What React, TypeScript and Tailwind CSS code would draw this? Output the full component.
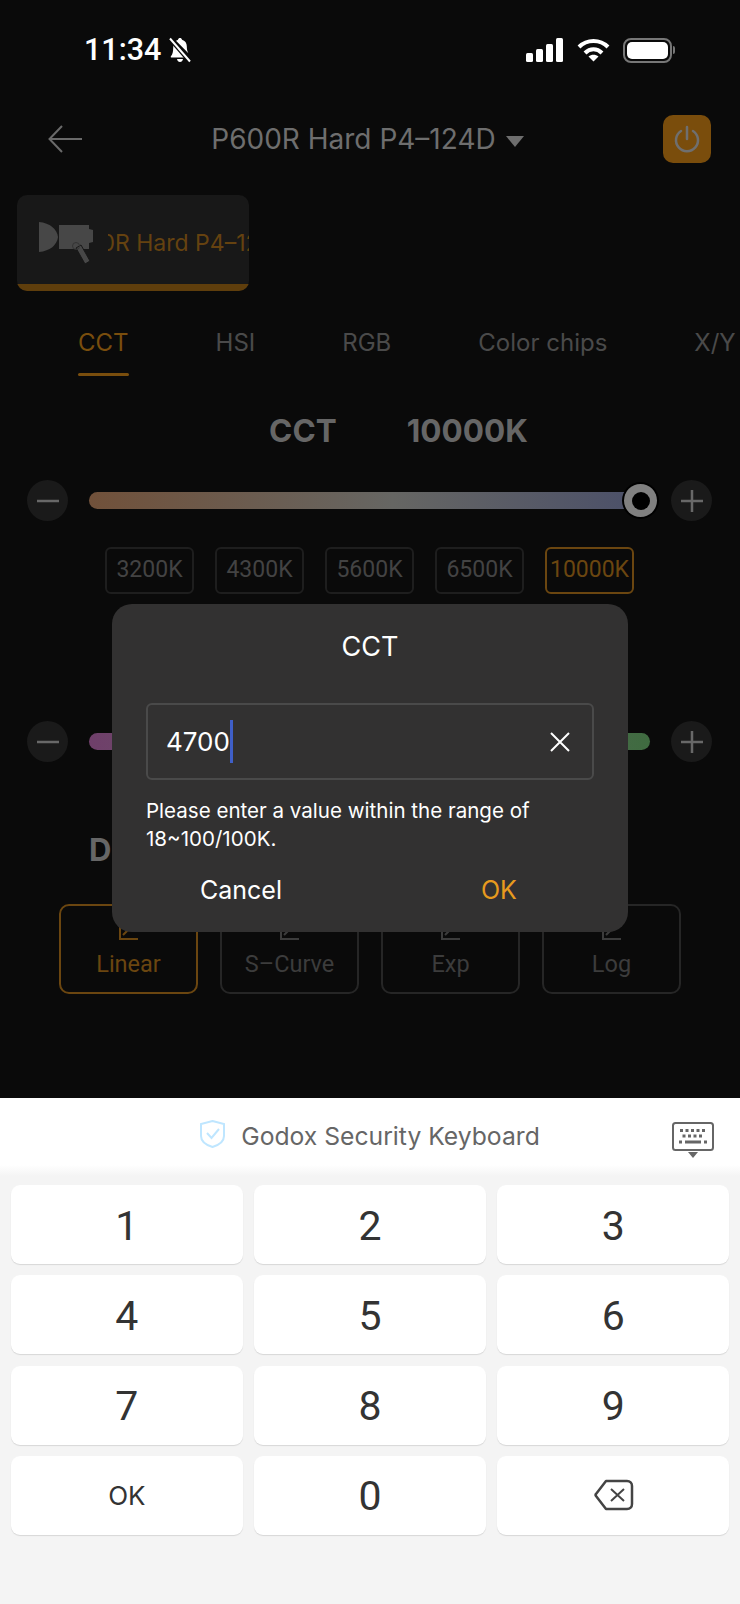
import React from "react";

const PRESETS = ["3200K", "4300K", "5600K", "6500K", "10000K"];
const CURVES = ["Linear", "S–Curve", "Exp", "Log"];
const TABS = ["CCT", "HSI", "RGB", "Color chips", "X/Y"];
const KEYS = ["1", "2", "3", "4", "5", "6", "7", "8", "9"];

const StatusBar = () => (
  <div className="flex h-[100px] items-center justify-between pl-[84px] pr-[65px] text-white">
    <div className="flex items-center gap-[7px]">
      <span className="font-['Roboto',sans-serif] text-[30.5px] font-medium leading-none">11:34</span>
      <svg width="24" height="26" viewBox="0 0 24 26" fill="white">
        <path d="M12 1c1 0 1.800.7 2 1.700 3 .8 4.800 3.300 4.800 6.500 0 3 .5 5.300 1.600 7L8 3.800C8.800 3.200 9.500 2.900 10 2.700 10.200 1.700 11 1 12 1zM5.800 7.500l12 13H3.500c-.8 0-1-.8-.6-1.300 1.700-1.900 2.300-4.500 2.300-8.500 0-1.200.2-2.300.6-3.200zM9 22h6c-.3 1.700-1.500 3-3 3s-2.700-1.300-3-3z" />
        <path d="M2 2l20 23" stroke="#0a0a0a" strokeWidth="4" />
        <path d="M2 1.500l20 23" stroke="white" strokeWidth="2" />
      </svg>
    </div>
    <div className="flex items-center gap-[13px]">
      <svg width="38" height="24" viewBox="0 0 38 24" fill="white">
        <rect x="0" y="15" width="7" height="9" rx="1.500" />
        <rect x="10" y="11" width="7" height="13" rx="1.500" />
        <rect x="20" y="6" width="7" height="18" rx="1.500" />
        <rect x="30" y="0" width="7" height="24" rx="1.500" />
      </svg>
      <svg width="33" height="24" viewBox="0 0 33 24" fill="none" stroke="white" strokeWidth="4">
        <path d="M2 9c8-8 21-8 29 0" />
        <path d="M8 15c5-5 12-5 17 0" />
        <path d="M16.500 23.500l-5-5c3-2.500 7-2.500 10 0z" fill="white" stroke="none" />
      </svg>
      <div className="flex items-center gap-[1px]">
        <div className="flex h-[25px] w-[49px] items-center rounded-[8px] border-2 border-[#777777] p-[2px]">
          <div className="h-full w-full rounded-[5px] bg-white" />
        </div>
        <div className="h-[8px] w-[2px] rounded-r-sm bg-[#777777]" />
      </div>
    </div>
  </div>
);

const Header = () => (
  <div className="relative mt-[15px] flex h-[48px] items-center pl-[48px] pr-[29px]">
    <svg width="34" height="28" viewBox="0 0 34 28" fill="none" stroke="#6a6a6a" strokeWidth="2">
      <path d="M34 14H2M14 1L1.500 14 14 27" />
    </svg>
    <div className="flex flex-1 items-center justify-center gap-[10px] pr-[10px]">
      <span className="text-[28px] leading-none text-[#6e6e6e]">P600R Hard P4–124D</span>
      <div className="mt-[4px] h-0 w-0 border-x-[9px] border-t-[11px] border-x-transparent border-t-[#6e6e6e]" />
    </div>
    <div className="flex h-[48px] w-[48px] items-center justify-center rounded-[10px] bg-[#7a4d0c]">
      <svg width="26" height="28" viewBox="0 0 26 28" fill="none" stroke="#6f6f6f" strokeWidth="2.500" strokeLinecap="round">
        <path d="M13 2v12" />
        <path d="M7 6a11 11 0 1 0 12 0" />
      </svg>
    </div>
  </div>
);

const LightCard = () => (
  <div className="ml-[17px] mt-[32px] flex h-[96px] w-[232px] flex-col overflow-hidden rounded-[10px] bg-[#181818]">
    <div className="flex flex-1 items-center overflow-hidden pl-[22px]">
      <svg className="mt-[6px] shrink-0" width="56" height="44" viewBox="0 0 56 44" fill="#474747">
        <path d="M0 1c11 1 18 7 19 15-1 8-8 14-19 15z" />
        <path d="M20 4h30v4l4 1v12l-4 1v6H20z" />
        <path d="M37 27l5-3 9 16-5 3z" stroke="#181818" strokeWidth="1" />
        <circle cx="37" cy="25" r="3.500" fill="none" stroke="#333333" strokeWidth="1" />
      </svg>
      <div className="ml-[13px] flex-1 overflow-hidden">
        <span className="-ml-[51px] mt-[8px] block whitespace-nowrap text-[23px] leading-none text-[#654210]">P600R Hard P4–124D</span>
      </div>
    </div>
    <div className="h-[7px] bg-[#5f3e0c]" />
  </div>
);

const Tabs = () => (
  <div className="mt-[34px] flex h-[51px] gap-[87px] overflow-hidden pl-[78px]">
    {TABS.map((tab, i) => (
      <div key={tab} className="relative shrink-0">
        <span className={`text-[24px] leading-[36px] ${i === 0 ? "text-[#7a4e0d]" : "text-[#4a4a4a]"}`}>{tab}</span>
        {i === 0 && <div className="absolute bottom-0 left-0 h-[3px] w-[51px] rounded-full bg-[#7a4e0d]" />}
      </div>
    ))}
  </div>
);

const RoundButton = ({ plus }: { plus?: boolean }) => (
  <div className="flex h-[41px] w-[41px] shrink-0 items-center justify-center rounded-full bg-[#1a1a1a]">
    <svg width="22" height="22" viewBox="0 0 22 22" stroke="#686868" strokeWidth="2.500">
      <path d="M0 11h22" />
      {plus && <path d="M11 0v22" />}
    </svg>
  </div>
);

const Page = () => (
  <div className="relative h-[1098px] bg-[#0a0a0a]">
    <StatusBar />
    <Header />
    <LightCard />
    <Tabs />

    <div className="mt-[35px] flex h-[40px] items-center justify-center gap-[70px] pl-[57px] text-[31.500px] font-bold leading-none text-[#666666]">
      <span>CCT</span>
      <span>10000K</span>
    </div>

    <div className="mt-[29px] flex items-center pl-[27px] pr-[28px]">
      <RoundButton />
      <div className="relative ml-[21px] mr-[30px] h-[17px] flex-1 rounded-full bg-[linear-gradient(to_right,#71513a,#666663_55%,#4b5069)]">
        <div className="absolute -right-[16px] -top-[8px] flex h-[33px] w-[33px] items-center justify-center rounded-full bg-[#808080] shadow-[0_0_0_2px_#000]">
          <div className="h-[18px] w-[18px] rounded-full bg-black" />
        </div>
      </div>
      <RoundButton plus />
    </div>

    <div className="mt-[26px] flex justify-center gap-[21px] pr-[1px]">
      {PRESETS.map((p) => (
        <div
          key={p}
          className={`flex h-[47px] w-[89px] items-center justify-center rounded-[6px] border-2 font-['Roboto',sans-serif] text-[23px] ${
            p === "10000K" ? "border-[#6b4610] text-[#6b4610]" : "border-[#1e1e1e] text-[#434343]"
          }`}
        >
          {p}
        </div>
      ))}
    </div>

    <div className="mt-[127px] flex items-center pl-[27px] pr-[28px]">
      <RoundButton />
      <div className="mx-[21px] h-[17px] flex-1 rounded-full bg-[linear-gradient(to_right,#6f3f6a,#666666_50%,#3f6b40)]" />
      <RoundButton plus />
    </div>

    <div className="ml-[89px] mt-[76px] text-[31px] font-bold leading-[24px] text-[#666666]">Dimming Curve</div>

    <div className="ml-[59px] mt-[42px] flex gap-[22px]">
      {CURVES.map((c, i) => (
        <div
          key={c}
          className={`flex h-[90px] w-[139px] flex-col items-center rounded-[10px] border-2 pt-[14px] ${
            i === 0 ? "border-[#6b4610] text-[#6b4610]" : "border-[#262626] text-[#3c3c3c]"
          }`}
        >
          <svg width="20" height="20" viewBox="0 0 20 20" fill="none" stroke="currentColor" strokeWidth="2">
            <path d="M1 1v18h18M4 15L18 1" />
          </svg>
          <span className="mt-[10px] font-['Roboto',sans-serif] text-[23.500px] leading-[28px]">{c}</span>
        </div>
      ))}
    </div>

    <CctDialog />
  </div>
);

const CctDialog = () => (
  <div className="absolute left-[112px] top-[604px] flex h-[328px] w-[516px] flex-col rounded-[20px] bg-[#323131] px-[34px] text-white">
    <div className="mt-[26px] text-center text-[27px] leading-[34px]">CCT</div>
    <div className="mt-[39px] flex h-[77px] items-center rounded-[6px] border-2 border-[#4a4a4a] pl-[18px] pr-[22px]">
      <span className="text-[26px] leading-none">4700</span>
      <div className="h-[43px] w-[3px] bg-[#3f5fc8]" />
      <svg className="ml-auto" width="20" height="20" viewBox="0 0 20 20" stroke="white" strokeWidth="2">
        <path d="M1 1l18 18M19 1L1 19" />
      </svg>
    </div>
    <p className="mt-[17px] text-[20.550px] leading-[28px]">
      Please enter a value within the range of
      <br />
      18~100/100K.
    </p>
    <div className="mt-[20px] flex">
      <span className="ml-[54px] text-[25px] leading-[34px]">Cancel</span>
      <span className="ml-[199px] text-[25px] leading-[34px] text-[#e79a1e]">OK</span>
    </div>
  </div>
);

const Keyboard = () => (
  <div className="h-[506px] bg-[#f4f4f4] text-[#333333]">
    <div className="relative flex h-[78px] items-center justify-center gap-[16px] bg-[linear-gradient(to_bottom,#ffffff_86%,#f4f4f4)] pb-[6px]">
      <svg width="25" height="28" viewBox="0 0 25 28" fill="none" stroke="#bfe6ff" strokeWidth="2">
        <path d="M12.500 1L24 4v12c0 5-5 9-11.500 11C6 25 1 21 1 16V4z" />
        <path d="M7 13l4.500 5L19 9" />
      </svg>
      <span className="mt-[4px] text-[24.700px] leading-none text-[#666666]">Godox Security Keyboard</span>
      <svg className="absolute right-[26px] top-[24px]" width="42" height="36" viewBox="0 0 42 36" fill="none">
        <rect x="1" y="1" width="40" height="27" rx="2.500" stroke="#666666" strokeWidth="2" />
        <path d="M8 8.500h27" stroke="#666666" strokeWidth="3" strokeDasharray="3 2.500" />
        <path d="M10.500 14h22" stroke="#666666" strokeWidth="3" strokeDasharray="3 2.500" />
        <path d="M7 20h3M13 20h16M32 20h3" stroke="#666666" strokeWidth="3" />
        <path d="M16 30h10l-5 6z" fill="#666666" />
      </svg>
    </div>
    <div className="grid grid-cols-3 gap-x-[11.500px] gap-y-[11.330px] px-[11px] pt-[9px]">
      {KEYS.map((k) => (
        <Key key={k}>
          <span className="pt-[3px] font-['Roboto',sans-serif] text-[41px] font-[450] leading-none">{k}</span>
        </Key>
      ))}
      <Key>
        <span className="pt-[2px] text-[26px] leading-none">OK</span>
      </Key>
      <Key>
        <span className="pt-[3px] font-['Roboto',sans-serif] text-[41px] font-[450] leading-none">0</span>
      </Key>
      <Key>
        <svg className="ml-[2px]" width="40" height="32" viewBox="0 0 40 32" fill="none" stroke="#444444" strokeWidth="2.500" strokeLinejoin="round">
          <path d="M12 2h21c3 0 5 2 5 5v18c0 3-2 5-5 5H12L2 17c-.6-.8-.6-1.400 0-2z" />
          <path d="M17 10l13 12M30 10L17 22" strokeWidth="2" />
        </svg>
      </Key>
    </div>
  </div>
);

const Key = ({ children }: { children: React.ReactNode }) => (
  <div className="flex h-[79px] items-center justify-center rounded-[9px] bg-white shadow-[0_1px_1px_rgba(0,0,0,0.12)]">
    {children}
  </div>
);

export default function App() {
  return (
    <div className="h-[1604px] w-[740px] overflow-hidden font-['Inter',sans-serif]">
      <Page />
      <Keyboard />
    </div>
  );
}
